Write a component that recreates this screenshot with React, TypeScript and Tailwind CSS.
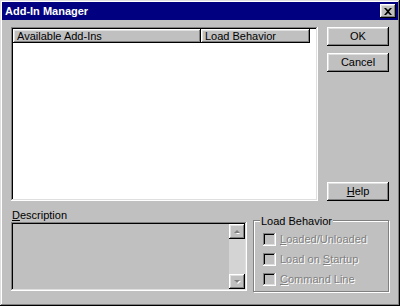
import React from "react";

const raised =
  "shadow-[inset_-1px_-1px_#000,inset_1px_1px_#fff,inset_-2px_-2px_#808080,inset_2px_2px_#dfdfdf]";
const sunken =
  "shadow-[inset_-1px_-1px_#fff,inset_1px_1px_#808080,inset_-2px_-2px_#dfdfdf,inset_2px_2px_#000]";
const dimText = "text-[#808080] [text-shadow:1px_1px_0_#fff]";

function Btn({ children }: { children: React.ReactNode }) {
  return (
    <div className={`w-[62px] h-[19px] bg-[#c0c0c0] flex items-center justify-center ${raised}`}>
      <span className="text-black">{children}</span>
    </div>
  );
}

function Check({ children }: { children: React.ReactNode }) {
  return (
    <div className="flex items-center gap-[4px] h-[13px]">
      <div className={`w-[13px] h-[13px] bg-[#c0c0c0] ${sunken}`} />
      <span className={dimText}>{children}</span>
    </div>
  );
}

function Arrow({ up }: { up?: boolean }) {
  return (
    <div className={`w-[16px] h-[15px] bg-[#c0c0c0] flex items-center justify-center ${raised}`}>
      <svg width="8" height="5" viewBox="0 0 8 5">
        {up ? (
          <>
            <path d="M1 5 L4 2 L7 5 Z" fill="#fff" transform="translate(1,1)" />
            <path d="M1 4 L4 1 L7 4 Z" fill="#808080" />
          </>
        ) : (
          <>
            <path d="M1 1 L4 4 L7 1 Z" fill="#fff" transform="translate(1,1)" />
            <path d="M1 1 L4 4 L7 1 Z" fill="#808080" />
          </>
        )}
      </svg>
    </div>
  );
}

export default function App() {
  return (
    <div className="w-[400px] h-[306px] bg-[#c0c0c0] p-[2px] flex flex-col font-['Liberation_Sans',Arial,sans-serif] text-[11px] leading-none shadow-[inset_-1px_-1px_#000,inset_1px_1px_#dfdfdf,inset_-2px_-2px_#808080,inset_2px_2px_#fff]">
      {/* title bar */}
      <div className="h-[18px] bg-[#000080] flex items-center justify-between pl-[3px] pr-[2px]">
        <span className="text-white font-bold text-[11px]">Add-In Manager</span>
        <div className={`w-[16px] h-[14px] bg-[#c0c0c0] flex items-center justify-center ${raised}`}>
          <svg width="8" height="7" viewBox="0 0 8 7">
            <path d="M0 0 L2 0 L4 2 L6 0 L8 0 L5 3.5 L8 7 L6 7 L4 5 L2 7 L0 7 L3 3.5 Z" fill="#000" />
          </svg>
        </div>
      </div>

      <div className="flex-1 flex flex-col pl-[9px] pt-[7px]">
        {/* top row */}
        <div className="flex gap-[9px]">
          <div className={`w-[307px] h-[174px] bg-white p-[2px] ${sunken}`}>
            <div className="flex h-[14px]">
              <div className={`w-[188px] h-full bg-[#c0c0c0] flex items-center pl-[4px] ${raised}`}>
                Available Add-Ins
              </div>
              <div className={`w-[109px] h-full bg-[#c0c0c0] flex items-center pl-[4px] ${raised}`}>
                Load Behavior
              </div>
            </div>
          </div>
          <div className="flex flex-col justify-between h-[174px]">
            <div className="flex flex-col gap-[7px]">
              <Btn>OK</Btn>
              <Btn>Cancel</Btn>
            </div>
            <Btn>
              <span className="underline">H</span>elp
            </Btn>
          </div>
        </div>

        {/* bottom row */}
        <div className="flex mt-[10px]">
          <div className="flex flex-col">
            <div className="h-[9px] leading-[9px] pl-[1px]">
              <span className="underline">D</span>escription
            </div>
            <div className={`mt-[2px] w-[236px] h-[69px] bg-[#c0c0c0] p-[2px] flex justify-end ${sunken}`}>
              <div className="w-[16px] h-full flex flex-col justify-between bg-[#d4d4d4]">
                <Arrow up />
                <Arrow />
              </div>
            </div>
          </div>

          <div className="ml-[6px] mt-[9px] w-[136px] h-[72px] border border-[#808080] shadow-[inset_1px_1px_#fff,1px_1px_#fff] relative">
            <span className="absolute left-[6px] -top-[5px] bg-[#c0c0c0] px-[1px] text-black">
              Load Behavior
            </span>
            <div className="flex flex-col gap-[7px] pl-[9px] pt-[12px]">
              <Check>
                <span className="underline">L</span>oaded/Unloaded
              </Check>
              <Check>
                Load on <span className="underline">S</span>tartup
              </Check>
              <Check>
                <span className="underline">C</span>ommand Line
              </Check>
            </div>
          </div>
        </div>
      </div>
    </div>
  );
}
